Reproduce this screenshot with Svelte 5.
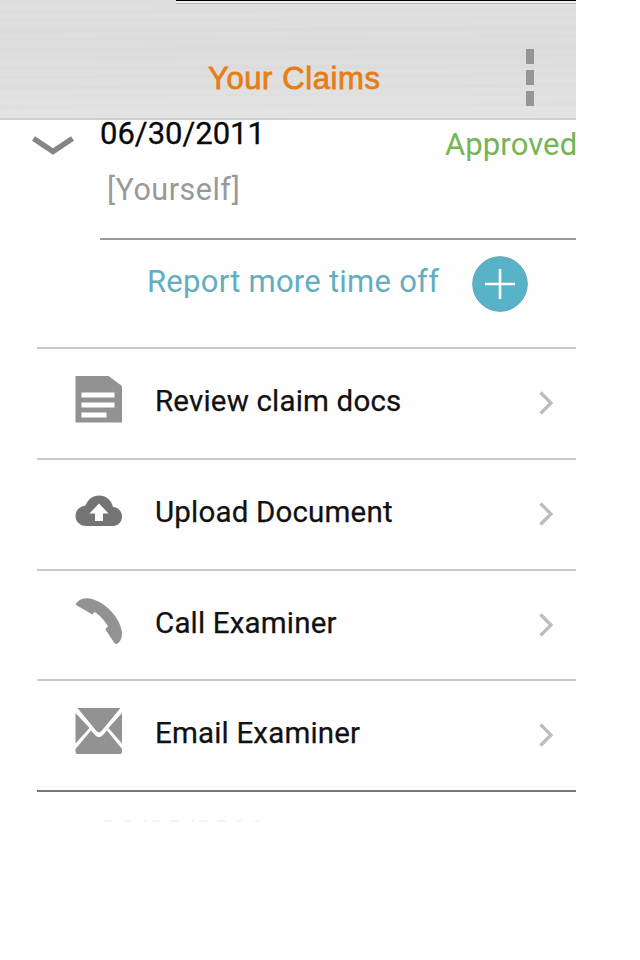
<script>
  const rows = [
    { icon: 'doc', label: 'Review claim docs' },
    { icon: 'cloud', label: 'Upload Document' },
    { icon: 'phone', label: 'Call Examiner' },
    { icon: 'mail', label: 'Email Examiner' }
  ];
</script>

<div class="screen">
  <header>
    <div class="status"></div>
    <h1>Your Claims</h1>
    <div class="menu"><i></i><i></i><i></i></div>
  </header>

  <section class="claim">
    <svg class="chevron" width="42" height="24" viewBox="0 0 42 24">
      <path d="M1.500 3.500L21 16.500L40.500 3.500" fill="none" stroke="#858585" stroke-width="5.500" />
    </svg>
    <div class="who">
      <div class="date">06/30/2011</div>
      <div class="person">[Yourself]</div>
    </div>
    <div class="state">Approved</div>
  </section>

  <section class="report">
    <span>Report more time off</span>
    <svg width="56" height="56" viewBox="0 0 56 56">
      <circle cx="28" cy="28" r="27.3" fill="#58b2c8" stroke="#67a5b2" stroke-width="1" />
      <path d="M28 13v30M13 28h30" stroke="#fff" stroke-width="2.6" />
    </svg>
  </section>

  <ul>
    {#each rows as row}
      <li>
        <svg class="icon" width="48" height="48" viewBox="0 0 48 48">
          {#if row.icon === 'doc'}
            <path d="M.5 1h33l13.500 10v36.500H.5z" fill="#929292" />
            <path d="M6.500 17.500h33v5h-33zM6.500 27.500h33v5h-33zM6.500 37.500h25v5h-25z" fill="#fff" />
          {:else if row.icon === 'cloud'}
            <path d="M11 40C5 40 .5 35.500 .5 30C.5 24.500 5 20 10.500 19.500C13 13 18 9.500 24 9.500C31 9.500 36.500 14 38 21C43.500 21.500 47 25.500 47 30.500C47 36 43 40 38 40z" fill="#747474" />
            <path d="M24 17.500L33.500 27.500H28V35H20V27.500H14.500z" fill="#fff" />
          {:else if row.icon === 'phone'}
            <path d="M1 6.500C4.500 1.500 11 .3 17 2C32.500 6.500 45 22 46.800 34C47.500 39 46 44 43 46.300C41.500 47.500 40 47 39 45.500L30.500 32.500C30 31.300 33.200 30.500 32.800 29C31 25.500 24.500 18 20 15.300C18.500 14.500 18.500 18 16.500 17L2 8.500C1 8 .5 7.200 1 6.500z" fill="#929292" />
          {:else}
            <path d="M2.500 1h43L26.500 24Q24 26.800 21.500 24zM.5 6L14.500 21L.5 36.500zM47 6L33.500 21L47 36.500zM16 23.500L20.500 28.500Q24 31.500 27.500 28.500L32 23.500L47 42V45Q47 47 45 47H2.500Q.5 47 .5 45V42z" fill="#929292" />
          {/if}
        </svg>
        <span class="label">{row.label}</span>
        <svg class="go" width="18" height="26" viewBox="0 0 18 26">
          <path d="M3.500 2.500L14 13L3.500 23.500" fill="none" stroke="#bcbcbc" stroke-width="3.2" />
        </svg>
      </li>
    {/each}
  </ul>

  <!-- the next claim, faded out at the bottom of the screen -->
  <div class="next">06/30/2011</div>
</div>

<style>
  :global(body) { background: #fff; }
  .screen { width: 576px; height: 822px; overflow: hidden; font-family: Roboto, sans-serif; background: #fefefe; }
  header {
    box-sizing: border-box; height: 120px; display: grid; grid-template-columns: 176px 1fr 70px; grid-template-rows: 4px 1fr;
    border-bottom: 2px solid #cfcfcf;
    background: repeating-linear-gradient(179.7deg, rgba(0,0,0,0.008) 0 2px, transparent 4px 9px, rgba(0,0,0,0.012) 11px 13px, transparent 15px 19px), linear-gradient(#dfdfdf, #dddddd 45%, #e3e3e3);
  }
  .status { box-sizing: border-box; grid-column: 2 / 4; height: 4px; border-top: 1px solid #000; border-bottom: 1px solid #b8b8b8; background: #eee; }
  h1 { grid-column: 2; grid-row: 2; margin: 57px 0 0 32px; font: 500 31px/36px "Liberation Sans", sans-serif; letter-spacing: 0.6px; color: #e67e17; -webkit-text-stroke: 0.8px #e67e17; white-space: nowrap; }
  .menu { grid-column: 3; grid-row: 2; display: flex; flex-direction: column; gap: 6px; padding: 45px 0 0 20px; }
  .menu i { width: 8px; height: 15px; background: #959595; }
  .claim { box-sizing: border-box; height: 120px; display: flex; position: relative; }
  .chevron { flex-shrink: 0; margin: 15px 0 0 32px; }
  .who { width: 345px; flex-shrink: 0; margin-left: 26px; white-space: nowrap; }
  .date { font-size: 31px; line-height: 36px; color: #080808; margin-top: -4px; -webkit-text-stroke: 0.3px #080808; }
  .person { font-size: 30.5px; line-height: 36px; letter-spacing: 0.5px; color: #999; margin: 20px 0 0 7px; }
  .state { font-size: 31px; line-height: 36px; letter-spacing: 0.1px; color: #76b456; margin-top: 7px; white-space: nowrap; }
  .claim::after { content: ""; position: absolute; left: 100px; right: 0; bottom: 0; height: 2px; background: #999; }
  .report { box-sizing: border-box; height: 107.4px; display: flex; justify-content: space-between; padding: 16px 48px 0 147px; color: #62adbf; font-size: 31px; line-height: 51px; letter-spacing: 0.25px; white-space: nowrap; }
  ul { list-style: none; margin: 0 0 0 37px; padding: 0; border-bottom: 2px solid #777; }
  li { box-sizing: border-box; height: 110.6px; display: flex; align-items: flex-start; border-top: 2px solid #c9c9c9; }
  .icon { margin: 26px 0 0 38px; }
  .label { flex: 1; margin: 34px 0 0 32px; font-size: 29.5px; line-height: 36px; letter-spacing: 0.18px; color: #111; -webkit-text-stroke: 0.25px #111; white-space: nowrap; }
  .go { margin: 41px 21px 0 0; }
  .next { margin: 22px 0 0 100px; font-size: 31px; line-height: 36px; color: #f3f3f3; }
</style>
